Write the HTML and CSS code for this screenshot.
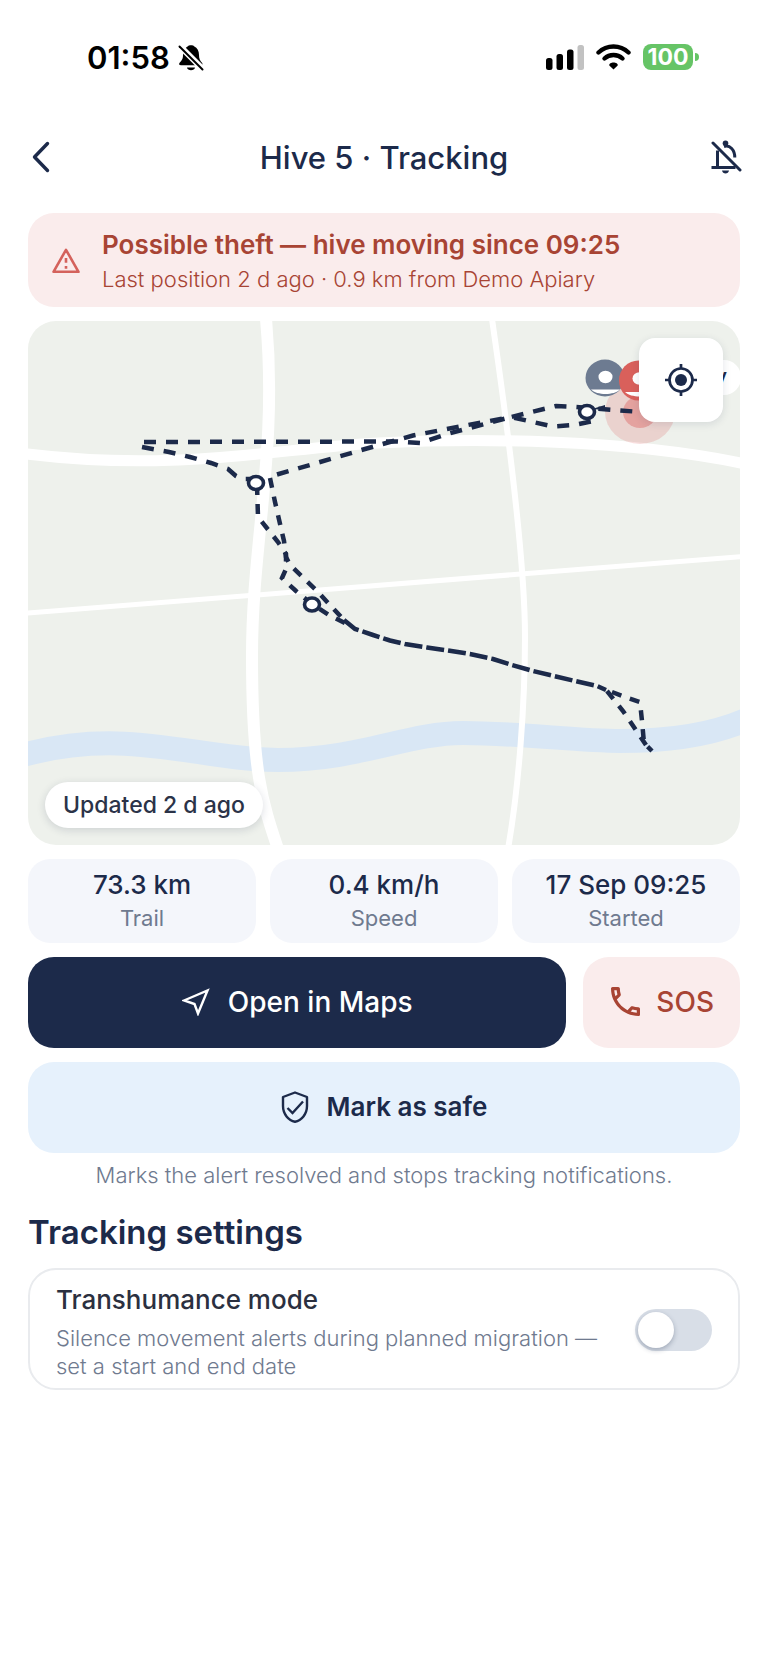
FILE: index.html
```html
<!DOCTYPE html>
<html lang="en">

<head>
    <meta charset="UTF-8">
    <meta name="viewport" content="width=device-width, initial-scale=1.0">
    <title>Hive 5 · Tracking</title>
    <link rel="stylesheet" href="styles.css">
</head>

<body>
    <div class="status-bar">
        <div class="status-left">
            <span class="clock">01:58</span>
            <svg width="26" height="27" viewBox="0 0 26 27">
                <path d="M5.5 7.5C7 4 9 2.800 10 2.200C10.400 0.800 15.600 0.800 16 2.200C19.500 3.800 21 7 21 11C21 15 22 16.500 24 18.800C25 20.500 24.500 21.300 23 21.300H3C1 21.300 0.600 20 1.800 18.600C4 16 5 15 5 11Z" fill="#000" />
                <path d="M9 23.500H17C16.500 27.200 9.500 27.200 9 23.500Z" fill="#000" />
                <path d="M3.500 1L26 23.500" stroke="#fff" stroke-width="2.200" />
                <path d="M1.500 2.500L24.500 25.500" stroke="#fff" stroke-width="5" />
                <path d="M1.500 2.500L24.500 25.500" stroke="#000" stroke-width="2" stroke-linecap="round" />
            </svg>
        </div>
        <div class="status-right">
            <svg width="38" height="25" viewBox="0 0 38 25">
                <rect x="0" y="13" width="6.500" height="12" rx="2.500" />
                <rect x="10.500" y="9" width="6.500" height="16" rx="2.500" />
                <rect x="21" y="4.500" width="6.500" height="20.500" rx="2.500" />
                <rect x="31.500" y="0" width="6.500" height="25" rx="2.500" fill="#c2c2c2" />
            </svg>
            <svg width="35" height="26" viewBox="0 0 35 26">
                <g fill="none" stroke="#000" stroke-width="4.400" stroke-linecap="round">
                    <path d="M2.500 8.500C11 0.500 24 0.500 32.500 8.500" />
                    <path d="M8.500 14.500C13.500 9.800 21.500 9.800 26.500 14.500" />
                </g>
                <path d="M17.500 25.500L13.300 21.500C12.500 17.400 22.500 17.400 21.700 21.500Z" />
            </svg>
            <span class="battery">100</span>
        </div>
    </div>

    <header class="app-bar">
        <button type="button" class="icon-button" aria-label="Back">
            <svg width="18" height="32" viewBox="0 0 18 32">
                <path d="M15.500 2.500L2.500 16L15.500 29.500" class="line" stroke-width="3.400" stroke-linecap="round" stroke-linejoin="round" />
            </svg>
        </button>
        <h1>Hive 5 · Tracking</h1>
        <button type="button" class="icon-button" aria-label="Mute alerts">
            <svg width="31" height="34" viewBox="0 0 31 34">
                <path d="M6.500 10.500V27.500M0.500 27.500H24.500M13 6.500C19 4.500 23.800 10 23.800 17.500" class="line" stroke-width="3" />
                <circle cx="14.500" cy="3.200" r="2.800" fill="#1c2a4a" />
                <path d="M11 30.500H18C17.500 34.500 11.500 34.500 11 30.500Z" fill="#1c2a4a" />
                <path d="M2 3L29 30" class="line" stroke-width="3" stroke-linecap="round" />
            </svg>
        </button>
    </header>

    <main>
        <section class="alert">
            <svg width="28" height="26" viewBox="0 0 28 26">
                <path d="M14 1.800L26.500 23.800H1.500Z" fill="none" stroke="#d4625c" stroke-width="2.600" stroke-linejoin="round" />
                <path d="M14 10V14.800M14 18V20.800" stroke="#d4625c" stroke-width="2.600" />
            </svg>
            <div>
                <h2>Possible theft — hive moving since 09:25</h2>
                <p>Last position 2 d ago · 0.9 km from Demo Apiary</p>
            </div>
        </section>

        <section class="map">
            <svg class="map-canvas" viewBox="0 0 712 524" role="img" aria-label="Trail map">
                <!-- river -->
                <path d="M-5 434C100 405 170 439 250 439S380 412 435 412S550 420 592 420S680 416 720 398" fill="none" stroke="#d9e7f5" stroke-width="24" />
                <!-- roads -->
                <g fill="none" stroke="#fff">
                    <path d="M-5 132.500C150 152 250 127 350 122S600 118 720 143.500" stroke-width="11" />
                    <path d="M238 -2C250 130 224 220 224 335S234 480 250 528" stroke-width="12" />
                    <path d="M464 -2C486 150 497 250 497 316S491 465 480 528" stroke-width="6" />
                    <path d="M-5 292.500L720 235" stroke-width="5" />
                </g>
                <!-- current position -->
                <ellipse cx="612" cy="91" rx="35" ry="32" fill="#dc5a5a" opacity="0.200" />
                <ellipse cx="612" cy="91" rx="17" ry="16" fill="#dc5a5a" opacity="0.400" />
                <!-- trail -->
                <g class="trail">
                    <path d="M116 121L369 120.500L392 122L419 113L483 96L525 105.500L546 104L568 99.500" />
                    <path d="M249 153.500L337 128L385 114.500L440 104L483 96L528 85L547 86L587 89L612 91" />
                    <path d="M114 126L141 131L162 136L183 142L200 148L208 155L214 158H228" />
                    <path class="steep" d="M229 164L230 196L250 221L258 233V248L254 257L268 270L284 283L301 294L317 302" />
                    <path class="steep" d="M242 157L247 181L256 220L258 236L262 244L289 270L315 298" />
                    <path class="double" d="M316 299L327 308L345 314L362 319.500L377 323L399 326.500L420 329.500L442 333L465 338L484 344L505 350L547 360L569 365L578 369" />
                    <path class="steep" d="M584 371L597 376L612 381L614 400L616 422L624 430" />
                    <path class="steep" d="M579 370L595 390L618 424" />
                </g>
                <path d="M564 88L577 84V89Z" fill="#1c2a4a" />
                <g fill="#fff" stroke="#1c2a4a" stroke-width="3.600">
                    <ellipse cx="228" cy="162" rx="7.500" ry="6.500" />
                    <ellipse cx="284" cy="283.500" rx="7.500" ry="6.500" />
                    <ellipse cx="559" cy="91" rx="7.500" ry="6.500" />
                </g>
                <!-- pins -->
                <g fill="#6d7b91">
                    <ellipse cx="577" cy="57" rx="19.500" ry="18.500" />
                    <path d="M563 68.500H592C586 74.500 569 74.500 563 68.500Z" fill="#fff" />
                    <ellipse cx="577.500" cy="56" rx="7" ry="6.200" fill="#fff" />
                </g>
                <g fill="#d9605b">
                    <ellipse cx="610.500" cy="59.500" rx="19.500" ry="20" />
                    <path d="M597 71H626C620 77 603 77 597 71Z" fill="#fff" />
                    <ellipse cx="611.500" cy="57.500" rx="7" ry="6.200" fill="#fff" />
                </g>
                <rect x="620" y="39" width="93" height="35" rx="17" fill="#fff" />
                <text x="699" y="62" text-anchor="end" class="pin-label">y</text>
            </svg>
            <button type="button" class="locate" aria-label="Center on hive">
                <svg width="34" height="34" viewBox="0 0 34 34">
                    <circle cx="17" cy="17" r="11.500" class="line" stroke-width="2.700" />
                    <circle cx="17" cy="17" r="6" fill="#1c2a4a" />
                    <path d="M17 1V6M17 28V33M1 17H6M28 17H33" class="line" stroke-width="2.700" />
                </svg>
            </button>
            <span class="updated">Updated 2 d ago</span>
        </section>

        <section class="stats">
            <div class="stat">
                <strong>73.3 km</strong>
                <span>Trail</span>
            </div>
            <div class="stat">
                <strong>0.4 km/h</strong>
                <span>Speed</span>
            </div>
            <div class="stat">
                <strong>17 Sep 09:25</strong>
                <span>Started</span>
            </div>
        </section>

        <div class="actions">
            <button type="button" class="btn btn-primary">
                <svg width="28" height="28" viewBox="0 0 28 28">
                    <path d="M2 12.500L25.500 2.500L16 25.500L12.500 16Z" fill="none" stroke="#fff" stroke-width="2.400" />
                </svg>
                Open in Maps
            </button>
            <button type="button" class="btn btn-danger">
                <svg width="29" height="29" viewBox="3 3 18 18">
                    <path d="M6.540 5c.06.89.21 1.760.45 2.590l-1.200 1.200c-.41-1.200-.67-2.470-.76-3.790h1.510m9.860 12.020c.85.24 1.720.39 2.600.45v1.490c-1.320-.09-2.590-.35-3.800-.75l1.200-1.190M7.500 3H4c-.55 0-1 .45-1 1 0 9.390 7.610 17 17 17 .55 0 1-.45 1-1v-3.490c0-.55-.45-1-1-1-1.240 0-2.450-.2-3.570-.57-.1-.04-.21-.05-.31-.05-.26 0-.51.1-.71.29l-2.200 2.200c-2.830-1.450-5.150-3.760-6.590-6.590l2.200-2.200c.28-.28.36-.67.25-1.020C8.700 6.450 8.500 5.250 8.500 4c0-.55-.45-1-1-1z" fill="#a84434" />
                </svg>
                SOS
            </button>
        </div>

        <button type="button" class="btn btn-safe">
            <svg width="28" height="32" viewBox="0 0 28 32">
                <path d="M14 1.500L26 6V15C26 23 20.500 29.500 14 30.700C7.500 29.500 2 23 2 15V6Z" class="line" stroke-width="2.400" stroke-linejoin="round" />
                <path d="M6.500 17L11.500 22L22 10.500" class="line" stroke-width="2.400" />
            </svg>
            Mark as safe
        </button>
        <p class="hint">Marks the alert resolved and stops tracking notifications.</p>

        <h2 class="section-title">Tracking settings</h2>
        <section class="setting">
            <label for="transhumance">
                <span class="setting-name">Transhumance mode</span>
                <span class="setting-text">Silence movement alerts during planned migration — set a start and end date</span>
            </label>
            <input type="checkbox" id="transhumance" class="switch">
        </section>
    </main>
</body>

</html>
```
FILE: styles.css
```css
* {
    box-sizing: border-box;
}

body {
    margin: 0;
    background: #fff;
    color: #1c2a4a;
    font-family: Inter, "Liberation Sans", sans-serif;
}

h1, h2, p {
    margin: 0;
}

button {
    border: none;
    padding: 0;
    background: none;
    color: inherit;
    font-family: inherit;
    cursor: pointer;
}

svg {
    display: block;
    flex: none;
}

.line {
    fill: none;
    stroke: #1c2a4a;
}

/* Status bar */
.status-bar {
    display: flex;
    align-items: center;
    justify-content: space-between;
    height: 114px;
    padding: 0 69px 0 87px;
    color: #000;
}

.status-left,
.status-right {
    display: flex;
    align-items: center;
}

.status-left {
    gap: 8px;
}

.status-right {
    gap: 12px;
}

.clock {
    font-size: 31px;
    font-weight: 600;
}

.battery {
    position: relative;
    width: 50px;
    margin-right: 6px;
    border-radius: 8px;
    background: #66c466;
    color: #fff;
    font-size: 23px;
    font-weight: 700;
    line-height: 26px;
    text-align: center;
}

.battery::after {
    content: "";
    position: absolute;
    top: 9px;
    right: -6px;
    width: 4px;
    height: 8px;
    border-radius: 0 4px 4px 0;
    background: #66c466;
}

/* App bar */
.app-bar {
    display: flex;
    align-items: center;
    justify-content: space-between;
    height: 86px;
    padding: 0 24px;
}

.app-bar h1 {
    font-size: 31px;
    font-weight: 500;
}

.icon-button {
    display: flex;
    justify-content: center;
    width: 34px;
}

main {
    display: flex;
    flex-direction: column;
    gap: 14px;
    padding: 13px 28px 40px;
}

/* Alert */
.alert {
    display: flex;
    align-items: center;
    gap: 22px;
    padding: 14px 24px 12px;
    border-radius: 26px;
    background: #faecec;
    color: #a84434;
}

.alert h2 {
    font-size: 26px;
    font-weight: 600;
    line-height: 36px;
}

.alert p {
    font-size: 22px;
    font-weight: 300;
    line-height: 32px;
}

/* Map */
.map {
    position: relative;
    overflow: hidden;
    border-radius: 28px;
    background: #eef1ec;
}

.map-canvas {
    width: 100%;
    height: auto;
}

.trail {
    fill: none;
    stroke: #1c2a4a;
    stroke-width: 4.5px;
    stroke-dasharray: 12 10;
}

.trail .steep {
    stroke-dasharray: 10 9;
}

.trail .double {
    stroke-dasharray: 18 4;
}

.pin-label {
    fill: #1c2a4a;
    font-size: 20px;
    font-weight: 600;
}

.locate {
    position: absolute;
    top: 17px;
    right: 17px;
    display: flex;
    align-items: center;
    justify-content: center;
    width: 84px;
    height: 84px;
    border-radius: 16px;
    background: #fff;
    box-shadow: 0 2px 8px rgba(28, 42, 74, 0.12);
}

.updated {
    position: absolute;
    bottom: 17px;
    left: 17px;
    padding: 0 18px;
    border-radius: 23px;
    background: #fff;
    box-shadow: 0 2px 8px rgba(28, 42, 74, 0.16);
    color: #2b3348;
    font-size: 23px;
    font-weight: 500;
    line-height: 46px;
}

/* Stats */
.stats {
    display: grid;
    grid-template-columns: repeat(3, 1fr);
    gap: 14px;
}

.stat {
    display: flex;
    flex-direction: column;
    align-items: center;
    padding: 9px 8px 8px;
    border-radius: 22px;
    background: #f4f6fb;
}

.stat strong {
    font-size: 26px;
    font-weight: 500;
    line-height: 34px;
}

.stat span {
    color: #6f7a8f;
    font-size: 22px;
    line-height: 33px;
}

/* Buttons */
.actions {
    display: flex;
    gap: 17px;
}

.btn {
    display: flex;
    align-items: center;
    justify-content: center;
    gap: 18px;
    height: 91px;
    padding-bottom: 2px;
    border-radius: 26px;
    font-size: 28px;
    font-weight: 500;
}

.btn-primary {
    flex: 1;
    background: #1c2a4a;
    color: #fff;
}

.btn-danger {
    gap: 16px;
    padding: 0 26px 2px 28px;
    background: #faecec;
    color: #a84434;
}

.btn-safe {
    background: #e6f1fc;
    font-size: 26px;
    font-weight: 600;
}

.hint {
    margin-top: -6px;
    color: #6f7a8f;
    font-size: 22px;
    font-weight: 300;
    line-height: 28px;
    text-align: center;
}

/* Settings */
.section-title {
    margin-top: 7px;
    font-size: 33px;
    font-weight: 600;
    line-height: 44px;
}

.setting {
    display: flex;
    align-items: center;
    justify-content: space-between;
    gap: 28px;
    padding: 10px 26px 8px;
    border: 2px solid #e9ebee;
    border-radius: 28px;
}

.setting-name,
.setting-text {
    display: block;
}

.setting-name {
    margin-bottom: 5px;
    color: #2b3040;
    font-size: 26px;
    font-weight: 500;
    line-height: 39px;
}

.setting-text {
    color: #6f7a8f;
    font-size: 22px;
    font-weight: 300;
    line-height: 28px;
}

.switch {
    flex: none;
    appearance: none;
    width: 77px;
    height: 42px;
    margin: 0;
    border-radius: 21px;
    background: #d8dee7;
    cursor: pointer;
}

.switch::before {
    content: "";
    display: block;
    width: 36px;
    height: 36px;
    margin: 3px;
    border-radius: 50%;
    background: #fff;
    box-shadow: 0 2px 5px rgba(28, 42, 74, 0.3);
}

.switch:checked {
    background: #1c2a4a;
}

.switch:checked::before {
    margin-left: 38px;
}
```
